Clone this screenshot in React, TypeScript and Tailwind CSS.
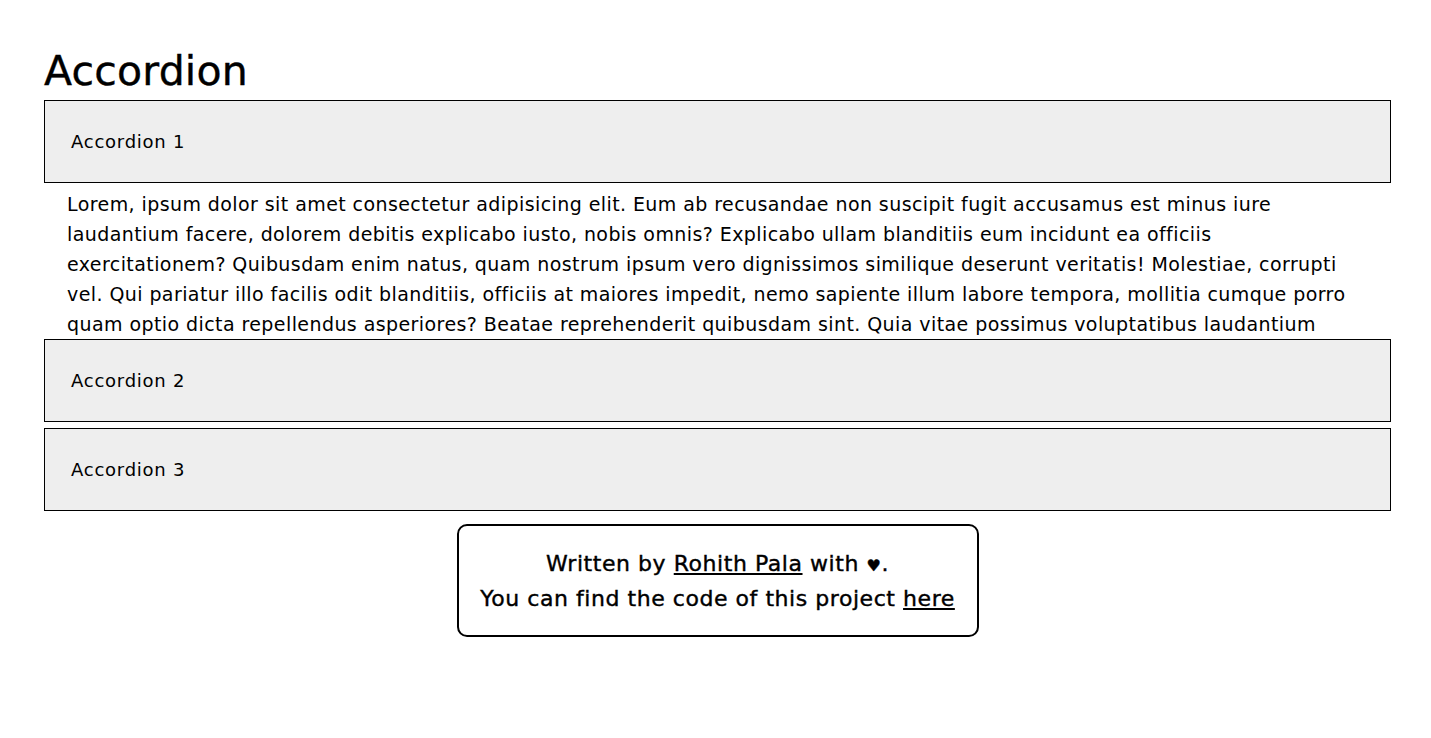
import React, { useState } from 'react';

const items = [
  {
    title: 'Accordion 1',
    body: 'Lorem, ipsum dolor sit amet consectetur adipisicing elit. Eum ab recusandae non suscipit fugit accusamus est minus iure laudantium facere, dolorem debitis explicabo iusto, nobis omnis? Explicabo ullam blanditiis eum incidunt ea officiis exercitationem? Quibusdam enim natus, quam nostrum ipsum vero dignissimos similique deserunt veritatis! Molestiae, corrupti vel. Qui pariatur illo facilis odit blanditiis, officiis at maiores impedit, nemo sapiente illum labore tempora, mollitia cumque porro quam optio dicta repellendus asperiores? Beatae reprehenderit quibusdam sint. Quia vitae possimus voluptatibus laudantium nesciunt, aperiam saepe ad, rerum fugiat similique at.',
  },
  {
    title: 'Accordion 2',
    body: 'Lorem ipsum dolor sit amet consectetur adipisicing elit. Quos, voluptatum. Sint, magni dolorum veniam repellat eveniet laboriosam at culpa nobis.',
  },
  {
    title: 'Accordion 3',
    body: 'Lorem ipsum dolor sit amet consectetur adipisicing elit. Officia, totam quasi dolores ad nulla harum perferendis.',
  },
];

export default function App() {
  const [open, setOpen] = useState<number | null>(0);

  return (
    <div className="min-h-screen bg-white text-black pl-[44px] pr-[40px] pt-[42px] font-['DejaVu_Sans',sans-serif]">
      <h1 className="text-[41px] leading-[58px] tracking-[0.2px] [-webkit-text-stroke:0.4px]">Accordion</h1>

      <div className="flex flex-col">
        {items.map((item, i) => (
          <div key={item.title} className="flex flex-col mb-[6px]">
            <button
              onClick={() => setOpen(open === i ? null : i)}
              className="h-[83px] w-full flex items-center text-left pl-[26px] bg-[#eeeeee] border border-black text-[18px] tracking-[0.75px] cursor-pointer"
            >
              {item.title}
            </button>
            {open === i && (
              <div className="h-[150px] pt-[6px] pl-[23px] pr-[23px]">
                <p className="h-[150px] overflow-hidden text-[19px] leading-[30px] tracking-[0.42px]">{item.body}</p>
              </div>
            )}
          </div>
        ))}
      </div>

      {/* footer */}
      <div className="flex justify-center mt-[7px]">
        <div className="w-[522px] h-[113px] border-2 border-black rounded-[10px] flex flex-col items-center justify-center text-[22px] leading-[35px] tracking-[0.55px] [-webkit-text-stroke:0.4px]">
          <p className="h-[35px]">
            Written by <a href="#" className="underline">Rohith Pala</a> with <span className="text-[16px] leading-none">♥</span>.
          </p>
          <p className="h-[35px]">
            You can find the code of this project <a href="#" className="underline">here</a>
          </p>
        </div>
      </div>
    </div>
  );
}
